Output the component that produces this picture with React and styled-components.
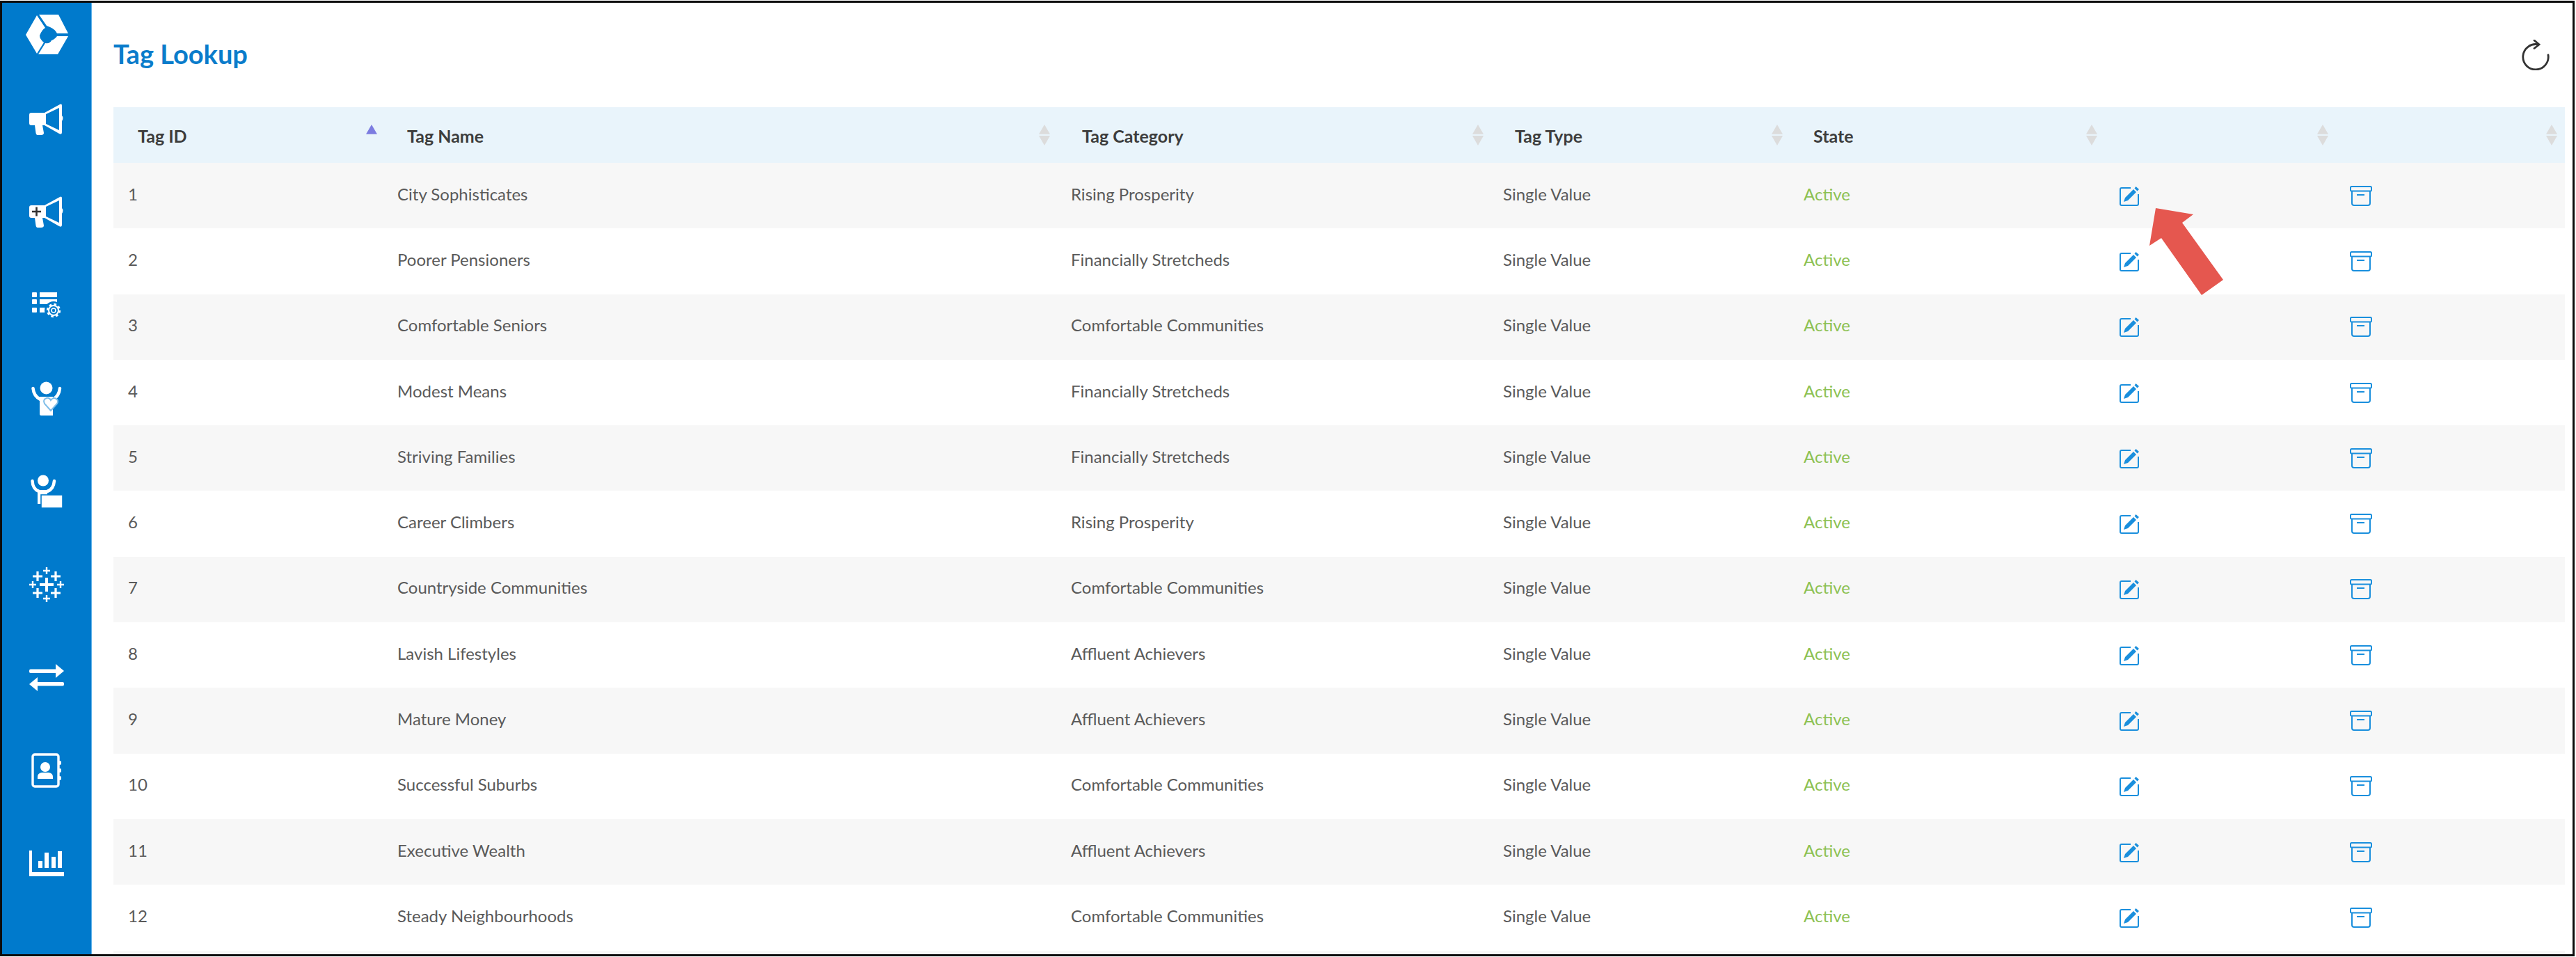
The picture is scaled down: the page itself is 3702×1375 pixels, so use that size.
import React from 'react';
import styled, { createGlobalStyle } from 'styled-components';

const Global = createGlobalStyle`
  html, body { margin: 0; padding: 0; background: #fff; overflow: hidden; }
  body { font-family: Lato, "Open Sans", "Liberation Sans", sans-serif; }
  * { box-sizing: border-box; }
`;

const Frame = styled.div`
  position: relative;
  width: 3700px;
  height: 1373px;
  margin-top: 1px;
  border: 3px solid #0c0c0c;
  display: flex;
  overflow: hidden;
  background: #fff;
`;

const Sidebar = styled.nav`
  width: 129px;
  flex: none;
  background: #007acc;
  border-right: 1px solid #5fb2ea;
  display: flex;
  flex-direction: column;
  align-items: center;
`;

const LogoSlot = styled.div`
  height: 101px;
  padding-top: 17px;
  flex: none;
`;

const NavItem = styled.div`
  height: 133.6px;
  flex: none;
  display: flex;
  align-items: center;
  justify-content: center;
`;

const Main = styled.main`
  flex: 1;
  min-width: 0;
  padding: 0 11px 0 31px;
`;

const Toolbar = styled.header`
  height: 150px;
  display: flex;
  align-items: center;
  justify-content: space-between;
  padding: 0 22px 0 0;
`;

const Title = styled.h1`
  margin: 0 0 5px;
  font-size: 38px;
  font-weight: 700;
  color: #0a7ccb;
`;

const Table = styled.table`
  width: 3523px;
  table-layout: fixed;
  border-collapse: collapse;
`;

const HeadRow = styled.tr`
  height: 80px;
  background: #e9f4fb;
`;

const Th = styled.th`
  padding: 0 ${p => p.$pr || 9}px 0 ${p => p.$pl}px;
  font-size: 25px;
  font-weight: 700;
  color: #3d3d3d;
  text-align: left;
`;

const ThInner = styled.div`
  display: flex;
  align-items: center;
  justify-content: space-between;
`;

const ThLabel = styled.span`
  position: relative;
  top: 1px;
`;

const Row = styled.tr`
  height: 94.3px;
  background: ${p => (p.$odd ? '#f7f7f7' : '#fff')};
`;

const Td = styled.td`
  padding: 0 0 6px 21px;
  font-size: 24px;
  color: #5a5a5a;
  white-space: nowrap;
`;

const ActiveTd = styled(Td)`
  color: #8cc152;
`;

const IconTd = styled(Td)`
  padding: 0 0 0 23px;
  line-height: 0;
`;

const ArrowMark = styled.svg`
  position: absolute;
  left: 3082px;
  top: 291px;
`;

const Icon = styled.svg`
  display: block;
  flex: none;
`;

const Logo = () => (
  <Icon width="62" height="58" viewBox="0 0 62 58" fill="#fff">
    <path d="M17 1 L29 19 Q24 22 21 30 Q21 35 27 40 L17 56 L1 29 Z" />
    <path d="M20 0 H48 L62 27 H46 Q43 21 36 18 L31 16 Z" />
    <path d="M62 31 L47 57 H19 L29 41 Q36 42 38 37 Q42 36 46 31 Z" />
  </Icon>
);

const Megaphone = ({ plus }) => (
  <Icon width="50" height="46" viewBox="0 0 50 46">
    <path
      fill="#fff"
      fillRule="evenodd"
      d="M3 13 H22 L44 1 Q47 -0.5 47 3 V17 Q50 20 47 25 V41 Q47 45 43 43 L22 31 H19 L21 42 Q21 45 17 45 H12 Q10 45 9.5 42 L8 31 H3 Q0 31 0 28 V16 Q0 13 3 13 Z M24 15 V29 L43 38 V6 Z"
    />
    {plus && <path d="M4 22 H17 M10.5 15.5 V28.5" stroke="#333" strokeWidth="2.6" />}
  </Icon>
);

const ListGear = () => (
  <Icon width="44" height="40" viewBox="0 0 44 40" fill="#fff">
    <rect x="1" y="1" width="7" height="7" rx="1" />
    <rect x="1" y="11" width="7" height="7" rx="1" />
    <rect x="1" y="23" width="7" height="7" rx="1" />
    <rect x="12" y="1" width="25" height="7" />
    <rect x="12" y="11" width="25" height="7" />
    <path d="M12 23 H20 L24 26.5 L20 30 H12 Z" />
    <circle cx="32" cy="27" r="13" fill="#007acc" />
    <circle cx="32" cy="27" r="8.5" fill="none" stroke="#fff" strokeWidth="3.4" strokeDasharray="3.4 3.3" />
    <circle cx="32" cy="27" r="7" fill="none" stroke="#fff" strokeWidth="2" />
    <circle cx="32" cy="27" r="3" fill="none" stroke="#fff" strokeWidth="1.6" />
  </Icon>
);

const PersonHeart = () => (
  <Icon width="44" height="50" viewBox="0 0 44 50">
    <circle cx="21.5" cy="9.5" r="9" fill="#fff" />
    <path d="M2.5 10 Q3.5 21 13 26 M41 10 Q40 21 31 26" fill="none" stroke="#fff" strokeWidth="4.5" strokeLinecap="round" />
    <path d="M12 22 H31 V49 H14 Q12 49 12 47 Z" fill="#fff" />
    <path
      d="M28 42 L19 32 Q16 26 22 24 Q26 23 28 27 Q31 23 35 24.5 Q40 27 37 32 Z"
      fill="#fff"
      stroke="#7fbde8"
      strokeWidth="2"
    />
  </Icon>
);

const PersonCard = () => (
  <Icon width="46" height="48" viewBox="0 0 46 48">
    <circle cx="18" cy="8.5" r="8" fill="#fff" />
    <path d="M2.5 9 Q3 21 12 24 M34 9 Q33 21 24 24" fill="none" stroke="#fff" strokeWidth="4.5" strokeLinecap="round" />
    <rect x="10" y="22" width="14" height="20" fill="#fff" />
    <rect x="15" y="29" width="31" height="19" fill="#fff" stroke="#007acc" strokeWidth="1.6" />
  </Icon>
);

const Tableau = () => (
  <Icon width="50" height="50" viewBox="0 0 50 50" stroke="#fff" fill="none">
    <path d="M25 15 V35 M15 25 H35" strokeWidth="4" />
    <path d="M12 6 V20 M5 13 H19 M38 6 V20 M31 13 H45 M12 30 V44 M5 37 H19 M38 30 V44 M31 37 H45" strokeWidth="3.2" />
    <path d="M25 0 V10 M20 5 H30 M25 40 V50 M20 45 H30 M5 20 V30 M0 25 H10 M45 20 V30 M40 25 H50" strokeWidth="2.4" />
  </Icon>
);

const Transfer = () => (
  <Icon width="50" height="39" viewBox="0 0 50 39" fill="#fff">
    <rect x="0" y="7.5" width="40" height="5.5" rx="2" />
    <path d="M38 0 L50 10 L38 20 Z" />
    <rect x="10" y="26" width="40" height="5.5" rx="2" />
    <path d="M12 19 L0 29 L12 39 Z" />
  </Icon>
);

const Contacts = () => (
  <Icon width="44" height="50" viewBox="0 0 44 50">
    <rect x="2" y="2" width="37" height="46" rx="3" fill="none" stroke="#fff" strokeWidth="3.4" />
    <rect x="39" y="11" width="4" height="6" rx="2" fill="#fff" />
    <rect x="39" y="22" width="4" height="6" rx="2" fill="#fff" />
    <rect x="39" y="33" width="4" height="6" rx="2" fill="#fff" />
    <circle cx="20" cy="20" r="7" fill="#fff" />
    <path d="M9 37 V34 Q9 29 15 28 H25 Q31 29 31 34 V37 Z" fill="#fff" />
  </Icon>
);

const Chart = () => (
  <Icon width="50" height="37" viewBox="0 0 50 37" fill="#fff">
    <path d="M0 0 H4 V31 H50 V37 H0 Z" />
    <rect x="13" y="15" width="6" height="10" />
    <rect x="22" y="3" width="6" height="22" />
    <rect x="32" y="9" width="6" height="16" />
    <rect x="41" y="1" width="6" height="24" />
  </Icon>
);

const Refresh = () => (
  <Icon width="40" height="44" viewBox="0 0 40 44" fill="none" stroke="#333" strokeWidth="2.8" strokeLinecap="round">
    <path d="M38 22 A18.2 18.2 0 1 1 24 7" />
    <path d="M18 1 L25 7 L18 12.5" />
  </Icon>
);

const Edit = () => (
  <Icon width="29" height="29" viewBox="0 0 29 29">
    <path d="M16 3 H3 Q1 3 1 5 V26 Q1 28 3 28 H25 Q27 28 27 26 V12" fill="none" stroke="#1a8fdd" strokeWidth="2" />
    <path d="M6 23 L8 17 L20 5 L24 9 L12 21 Z M21.5 3.5 L23.5 1 L28 5 L25.5 7.5 Z" fill="#1a8fdd" />
  </Icon>
);

const Archive = () => (
  <Icon width="32" height="29" viewBox="0 0 32 29" fill="none" stroke="#1a8fdd" strokeWidth="2">
    <rect x="1" y="1" width="30" height="6.5" rx="1.5" />
    <path d="M3 7.5 V25 Q3 28 6 28 H26 Q29 28 29 25 V7.5" />
    <path d="M10 13 H21" />
  </Icon>
);

const Sort = ({ active }) => (
  <Icon width="16" height="30" viewBox="0 0 16 30">
    <path d="M8 0 L16 13.7 H0 Z" fill={active ? '#7c7ce0' : '#dcdcdc'} />
    {!active && <path d="M0 16 H16 L8 30 Z" fill="#dcdcdc" />}
  </Icon>
);

const columns = [
  { label: 'Tag ID', pl: 35, width: 387, pr: 8, active: true },
  { label: 'Tag Name', pl: 35, width: 968 },
  { label: 'Tag Category', pl: 37, width: 621, pr: 7 },
  { label: 'Tag Type', pl: 38, width: 432 },
  { label: 'State', pl: 35, width: 452 },
  { label: '', pl: 21, width: 331, pr: 8 },
  { label: '', pl: 21, width: 332, pr: 11 },
];

const tags = [
  ['City Sophisticates', 'Rising Prosperity'],
  ['Poorer Pensioners', 'Financially Stretcheds'],
  ['Comfortable Seniors', 'Comfortable Communities'],
  ['Modest Means', 'Financially Stretcheds'],
  ['Striving Families', 'Financially Stretcheds'],
  ['Career Climbers', 'Rising Prosperity'],
  ['Countryside Communities', 'Comfortable Communities'],
  ['Lavish Lifestyles', 'Affluent Achievers'],
  ['Mature Money', 'Affluent Achievers'],
  ['Successful Suburbs', 'Comfortable Communities'],
  ['Executive Wealth', 'Affluent Achievers'],
  ['Steady Neighbourhoods', 'Comfortable Communities'],
];

export default function App() {
  return (
    <>
      <Global />
      <Frame>
        <Sidebar>
          <LogoSlot><Logo /></LogoSlot>
          <NavItem><Megaphone /></NavItem>
          <NavItem><Megaphone plus /></NavItem>
          <NavItem><ListGear /></NavItem>
          <NavItem><PersonHeart /></NavItem>
          <NavItem><PersonCard /></NavItem>
          <NavItem><Tableau /></NavItem>
          <NavItem><Transfer /></NavItem>
          <NavItem><Contacts /></NavItem>
          <NavItem><Chart /></NavItem>
        </Sidebar>
        <Main>
          <Toolbar>
            <Title>Tag Lookup</Title>
            <Refresh />
          </Toolbar>
          <Table>
            <colgroup>
              {columns.map((c, i) => <col key={i} width={c.width} />)}
            </colgroup>
            <thead>
              <HeadRow>
                {columns.map((c, i) => (
                  <Th key={i} $pl={c.pl} $pr={c.pr}>
                    <ThInner>
                      <ThLabel>{c.label}</ThLabel>
                      <Sort active={c.active} />
                    </ThInner>
                  </Th>
                ))}
              </HeadRow>
            </thead>
            <tbody>
              {tags.map(([name, category], i) => (
                <Row key={name} $odd={i % 2 === 0}>
                  <Td>{i + 1}</Td>
                  <Td>{name}</Td>
                  <Td>{category}</Td>
                  <Td>Single Value</Td>
                  <ActiveTd>Active</ActiveTd>
                  <IconTd><Edit /></IconTd>
                  <IconTd><Archive /></IconTd>
                </Row>
              ))}
              <Row $odd>
                <Td colSpan={7} />
              </Row>
            </tbody>
          </Table>
        </Main>
        <ArrowMark width="114" height="132" viewBox="0 0 114 132">
          <path d="M13 4 L67 13 L51 25 L110 107 L79 129 L21 47 L4 58 Z" fill="#e5574f" />
        </ArrowMark>
      </Frame>
    </>
  );
}
